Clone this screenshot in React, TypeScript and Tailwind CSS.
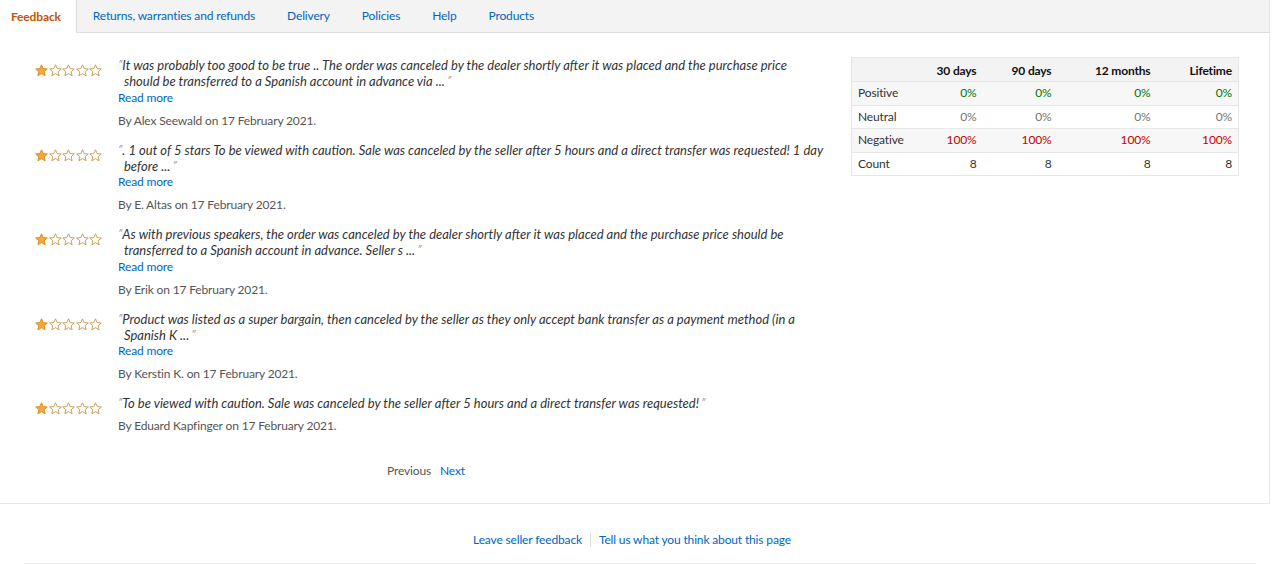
import React from 'react'

const tabs = ['Feedback', 'Returns, warranties and refunds', 'Delivery', 'Policies', 'Help', 'Products']

const reviews = [
  {
    text: 'It was probably too good to be true .. The order was canceled by the dealer shortly after it was placed and the purchase price should be transferred to a Spanish account in advance via ...',
    more: true,
    by: 'Alex Seewald',
  },
  {
    text: '. 1 out of 5 stars To be viewed with caution. Sale was canceled by the seller after 5 hours and a direct transfer was requested! 1 day before ...',
    more: true,
    by: 'E. Altas',
  },
  {
    text: 'As with previous speakers, the order was canceled by the dealer shortly after it was placed and the purchase price should be transferred to a Spanish account in advance. Seller s ...',
    more: true,
    by: 'Erik',
  },
  {
    text: 'Product was listed as a super bargain, then canceled by the seller as they only accept bank transfer as a payment method (in a Spanish K ...',
    more: true,
    by: 'Kerstin K.',
  },
  {
    text: 'To be viewed with caution. Sale was canceled by the seller after 5 hours and a direct transfer was requested!',
    more: false,
    by: 'Eduard Kapfinger',
  },
]

const rows = [
  { label: 'Positive', vals: ['0%', '0%', '0%', '0%'], color: 'text-[#007600]', bg: 'bg-[#f7f7f7]' },
  { label: 'Neutral', vals: ['0%', '0%', '0%', '0%'], color: 'text-[#767676]', bg: 'bg-white' },
  { label: 'Negative', vals: ['100%', '100%', '100%', '100%'], color: 'text-[#c40000]', bg: 'bg-[#f7f7f7]' },
  { label: 'Count', vals: ['8', '8', '8', '8'], color: 'text-[#333]', bg: 'bg-white' },
]

const cols = [
  { h: '30 days', w: 'w-[75px]' },
  { h: '90 days', w: 'w-[75px]' },
  { h: '12 months', w: 'w-[99px]' },
  { h: 'Lifetime', w: 'w-[82px]' },
]

const starPath = 'M6.5 0.8 L8.2 4.6 L12.3 5 L9.2 7.7 L10.1 11.8 L6.5 9.6 L2.9 11.8 L3.8 7.7 L0.7 5 L4.8 4.6 Z'

function Stars() {
  return (
    <div className="flex gap-[0.5px] pt-[7px]">
      {[0, 1, 2, 3, 4].map(i => (
        <svg key={i} width="13" height="13" viewBox="0 0 13 13">
          <path
            d={starPath}
            fill={i === 0 ? '#f3a847' : 'white'}
            stroke={i === 0 ? '#d9901d' : '#c8a05a'}
            strokeWidth="1"
            strokeLinejoin="round"
          />
        </svg>
      ))}
    </div>
  )
}

export default function App() {
  return (
    <div
      className="w-[1280px] bg-white text-[12px] tracking-[-0.15px] text-[#111]"
      style={{ fontFamily: 'Lato, "Liberation Sans", sans-serif' }}
    >
      <div className="w-[1270px] border-r border-b border-[#e7e7e7]">
        <div className="flex h-[33px] bg-[#f3f3f3]">
          {tabs.map((t, i) =>
            i === 0 ? (
              <div key={t} className="h-[33px] pl-[11px] pr-[15px] flex items-center bg-white border-r border-[#dddddd] font-bold text-[#c45500]">
                {t}
              </div>
            ) : (
              <div key={t} className="h-[33px] px-[16px] flex items-center border-b border-[#dddddd] text-[#0066c0]">
                {t}
              </div>
            )
          )}
          <div className="flex-1 border-b border-[#dddddd]" />
        </div>

        <div className="flex pt-[24px] pb-[24px]">
          <div className="w-[851px] shrink-0 pl-[35px] pr-[27px]">
            {reviews.map(r => (
              <div key={r.by} className="flex mb-[13px]">
                <div className="w-[83px] shrink-0">
                  <Stars />
                </div>
                <div className="flex-1">
                  <p className="italic text-[13px] tracking-normal text-[#333] leading-[16px] pl-[6px] -indent-[6px]">
                    <span className="text-[9px] align-top text-[#888]">″</span>
                    {r.text}
                    <span className="text-[9px] align-top text-[#888]"> ″</span>
                  </p>
                  {r.more && <div className="text-[#0066c0] leading-[16px] mt-[0.5px]">Read more</div>}
                  <div className="text-[#555] mt-[7px] leading-[16px]">By {r.by} on 17 February 2021.</div>
                </div>
              </div>
            ))}
            <div className="flex justify-center gap-[9px] pr-[7px] pt-[16px] leading-[16px]">
              <span className="text-[#555]">Previous</span>
              <span className="text-[#0066c0]">Next</span>
            </div>
          </div>

          <div className="shrink-0">
            <table className="w-[387px] table-fixed border border-[#e7e7e7] border-collapse">
              <thead>
                <tr className="bg-[#f3f3f3] h-[24px]">
                  <th className="w-[56px]" />
                  {cols.map(c => (
                    <th key={c.h} className={`${c.w} text-right font-bold px-[6px] pt-[2px]`}>{c.h}</th>
                  ))}
                </tr>
              </thead>
              <tbody>
                {rows.map(r => (
                  <tr key={r.label} className={`${r.bg} h-[23.5px] border-t border-[#e7e7e7]`}>
                    <td className="pl-[6px] text-[#333]">{r.label}</td>
                    {r.vals.map((v, j) => (
                      <td key={j} className={`text-right px-[6px] ${r.color}`}>{v}</td>
                    ))}
                  </tr>
                ))}
              </tbody>
            </table>
          </div>
        </div>
      </div>

      <div className="flex justify-center items-center h-[60px] pt-[12px] pr-[16px] mx-[25px] border-b border-[#eeeeee] text-[#0066c0]">
        <span>Leave seller feedback</span>
        <span className="mx-[8px] h-[14px] w-px bg-[#dddddd]" />
        <span>Tell us what you think about this page</span>
      </div>
    </div>
  )
}
